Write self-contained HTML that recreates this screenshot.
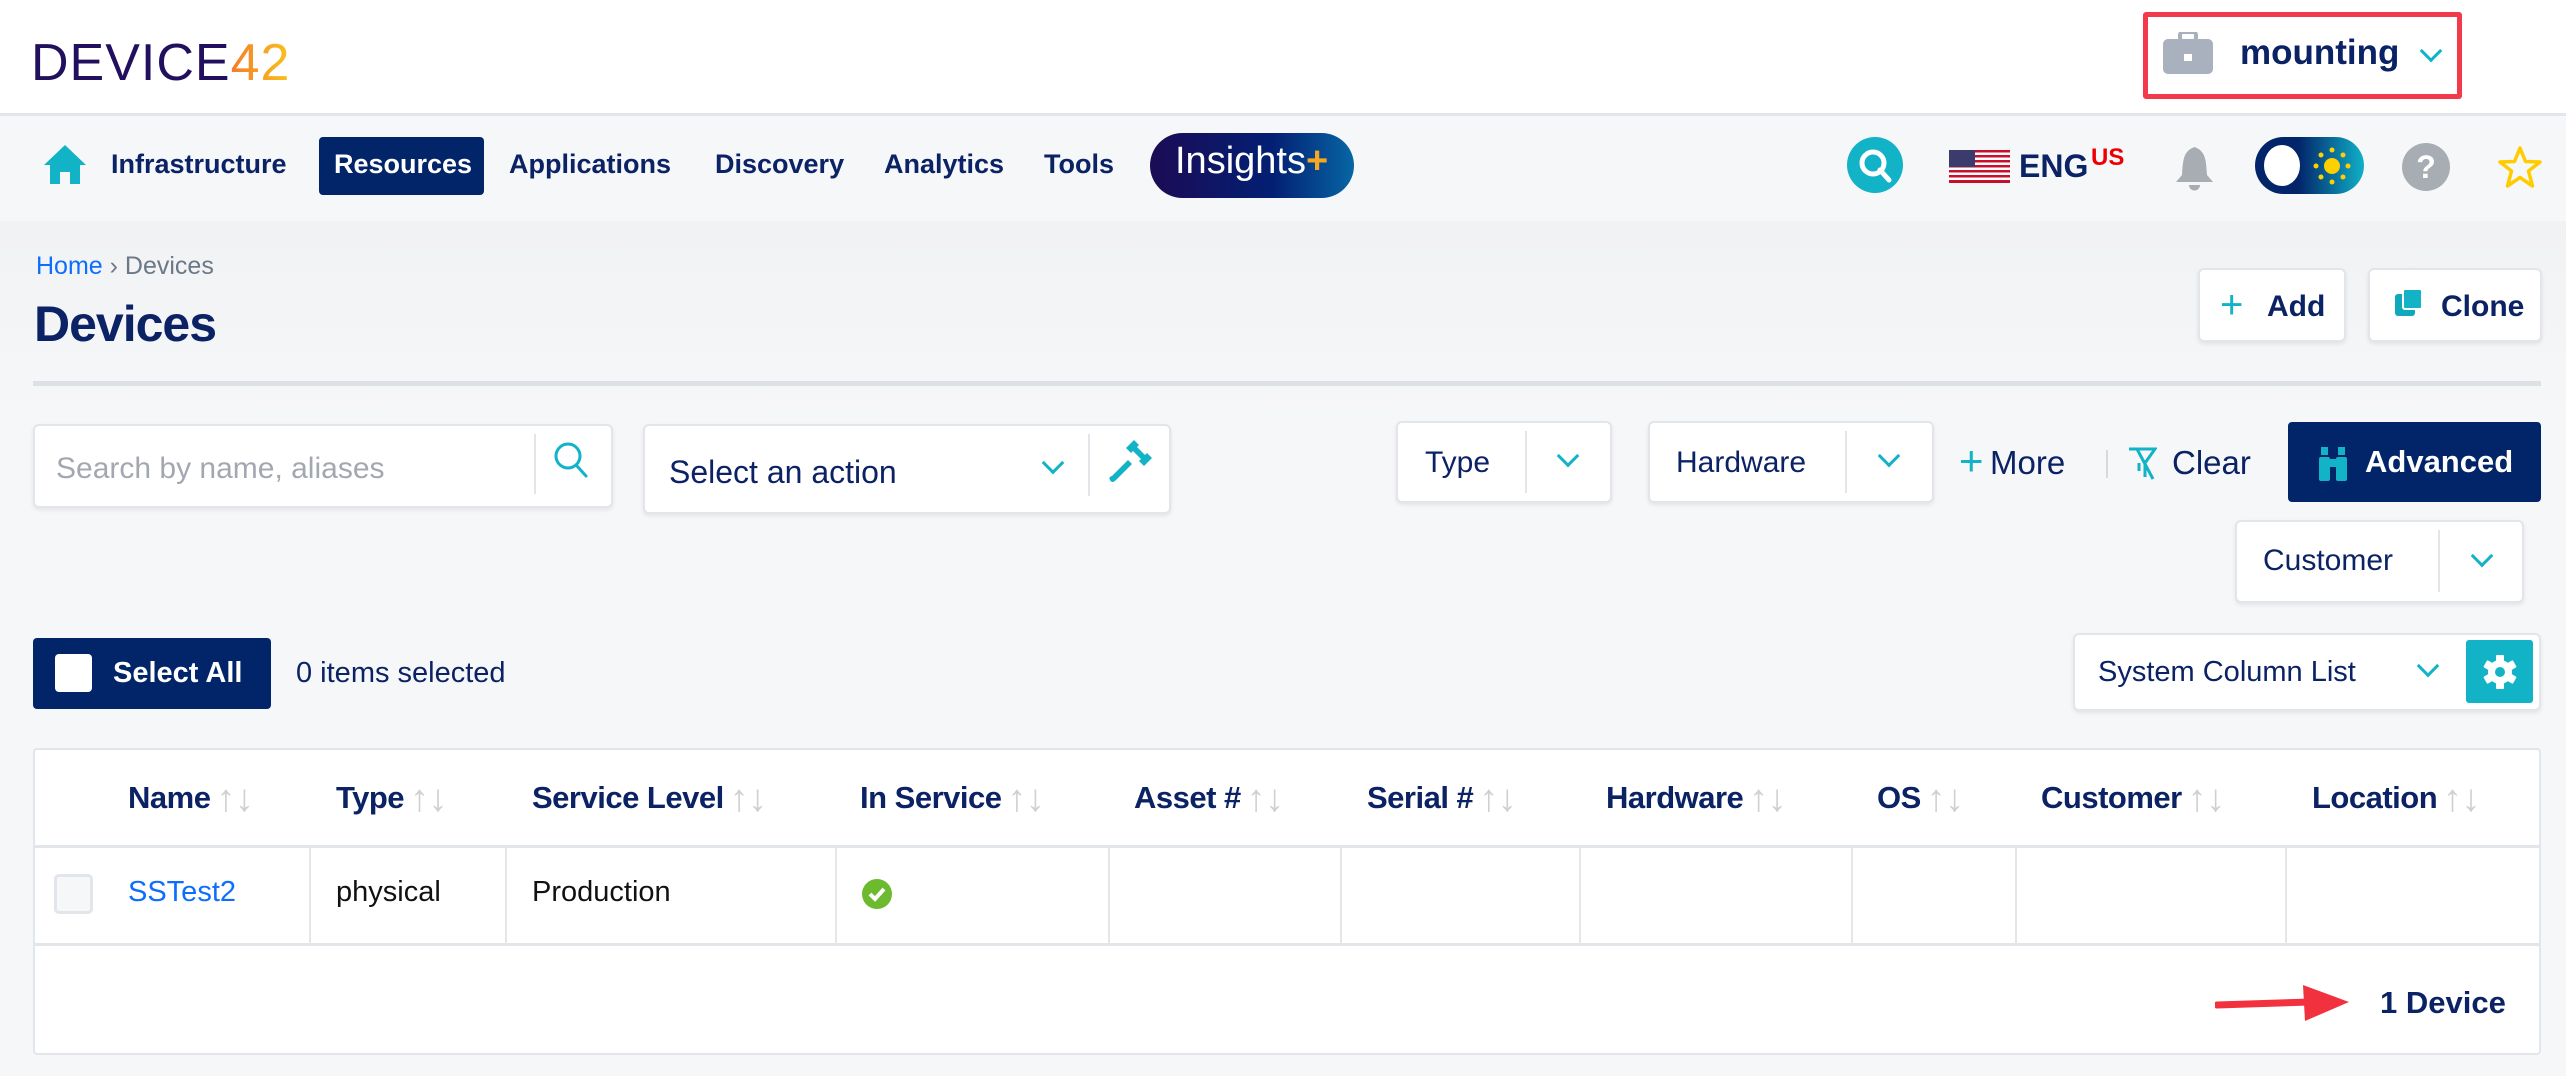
<!DOCTYPE html>
<html><head><meta charset="utf-8"><style>
*{box-sizing:border-box;margin:0;padding:0}
body{width:2566px;height:1076px;position:relative;overflow:hidden;background:#f6f7f9;font-family:"Liberation Sans",sans-serif;color:#0b2265}
.a{position:absolute}
.b{font-weight:bold}
.box{position:absolute;background:#fff;border:2px solid #e2e5e9;border-radius:6px;box-shadow:0 2px 4px rgba(0,0,0,.08)}
.nav{font-size:27px;font-weight:bold;top:149px}
.chev{position:absolute;width:16px;height:16px;border-right:3.5px solid #12b3c6;border-bottom:3.5px solid #12b3c6;transform:rotate(45deg)}
.th{position:absolute;top:780px;font-size:31px;font-weight:bold;letter-spacing:-0.5px}
.th span{color:#cdd1d5;font-weight:normal;margin-left:6px;font-size:38px;line-height:31px;vertical-align:-3px}
.vl{position:absolute;top:846px;width:2px;height:98px;background:#e4e7ea}
</style></head><body>
<div class="a" style="left:0;top:0;width:2566px;height:116px;background:#fff;border-bottom:3px solid #e2e5e9"></div>
<div class="a" style="left:31px;top:33px;font-size:52px;letter-spacing:1px;color:#22105f">DEVICE<span style="background:linear-gradient(90deg,#f57c2a,#f9c21a);-webkit-background-clip:text;color:transparent">42</span></div>
<div class="a" style="left:2143px;top:12px;width:319px;height:87px;border:5px solid #f23a4a;border-radius:3px;background:#fff"></div>
<svg class="a" style="left:2163px;top:32px" width="50" height="42" viewBox="0 0 50 42"><rect x="17" y="0" width="16" height="9" rx="3" fill="none" stroke="#a8b1bd" stroke-width="4"/><rect x="0" y="7" width="50" height="35" rx="5" fill="#a8b1bd"/><rect x="21" y="22" width="8" height="7" fill="#fff"/></svg>
<div class="a b" style="left:2240px;top:33px;font-size:35px;color:#0b2265">mounting</div>
<div class="chev" style="left:2423px;top:43px"></div>
<div class="a" style="left:0;top:119px;width:2566px;height:102px;background:#f6f7f9"></div>
<svg class="a" style="left:44px;top:145px" width="42" height="39" viewBox="0 0 42 39"><path d="M21 0 L42 20 L36 20 L36 39 L26 39 L26 27 L16 27 L16 39 L6 39 L6 20 L0 20Z" fill="#12b3c6"/></svg>
<div class="a nav" style="left:111px">Infrastructure</div>
<div class="a" style="left:319px;top:137px;width:165px;height:58px;background:#02256a;border-radius:4px"></div>
<div class="a nav" style="left:334px;color:#fff">Resources</div>
<div class="a nav" style="left:509px">Applications</div>
<div class="a nav" style="left:715px">Discovery</div>
<div class="a nav" style="left:884px">Analytics</div>
<div class="a nav" style="left:1044px">Tools</div>
<div class="a" style="left:1150px;top:133px;width:204px;height:65px;border-radius:33px;background:linear-gradient(90deg,#1c0b55,#031f73 60%,#0766a4)"></div>
<div class="a" style="left:1175px;top:140px;font-size:38px;color:#fff">Insights<span style="color:#f5a623;font-weight:bold">+</span></div>
<svg class="a" style="left:1847px;top:137px" width="56" height="56" viewBox="0 0 56 56"><circle cx="28" cy="28" r="28" fill="#12b3c6"/><circle cx="26" cy="26" r="11" fill="none" stroke="#fff" stroke-width="5"/><path d="M33 33 L42 43" stroke="#fff" stroke-width="5" stroke-linecap="round"/></svg>
<svg class="a" style="left:1949px;top:150px" width="61" height="33" viewBox="0 0 61 33"><rect width="61" height="33" fill="#fff"/><g fill="#c8102e"><rect y="0" width="61" height="2.5"/><rect y="5" width="61" height="2.5"/><rect y="10" width="61" height="2.5"/><rect y="15" width="61" height="2.5"/><rect y="20" width="61" height="2.5"/><rect y="25" width="61" height="2.5"/><rect y="30" width="61" height="3"/></g><rect width="26" height="17" fill="#3c3b6e"/></svg>
<div class="a b" style="left:2019px;top:148px;font-size:32px;color:#0b2265">ENG</div>
<div class="a b" style="left:2091px;top:144px;font-size:24px;color:#e00">US</div>
<svg class="a" style="left:2173px;top:145px" width="43" height="48" viewBox="0 0 43 48"><path d="M21.5 2 C10 6 10 16 9 30 L3 37 L40 37 L34 30 C33 16 33 6 21.5 2Z" fill="#a8adb4"/><path d="M16 40 a5.5 5.5 0 0 0 11 0Z" fill="#a8adb4"/></svg>
<div class="a" style="left:2255px;top:137px;width:109px;height:57px;border-radius:29px;background:linear-gradient(90deg,#02256a 40%,#10b0c8)"></div>
<div class="a" style="left:2264px;top:145px;width:36px;height:41px;border-radius:50%;background:#fff"></div>
<svg class="a" style="left:2312px;top:146px" width="40" height="40" viewBox="0 0 40 40"><circle cx="20" cy="20" r="8" fill="#ffd000"/><g fill="#ffd000"><circle cx="20" cy="4" r="2.5"/><circle cx="20" cy="36" r="2.5"/><circle cx="4" cy="20" r="2.5"/><circle cx="36" cy="20" r="2.5"/><circle cx="9" cy="9" r="2.5"/><circle cx="31" cy="9" r="2.5"/><circle cx="9" cy="31" r="2.5"/><circle cx="31" cy="31" r="2.5"/></g></svg>
<div class="a" style="left:2402px;top:143px;width:48px;height:48px;border-radius:50%;background:#a8adb4;color:#fff;font-size:32px;font-weight:bold;text-align:center;line-height:48px">?</div>
<svg class="a" style="left:2497px;top:145px" width="46" height="44" viewBox="0 0 46 44"><path d="M23 3 L28.5 16.5 L43 17 L31.5 26 L35.5 41 L23 32.5 L10.5 41 L14.5 26 L3 17 L17.5 16.5Z" fill="none" stroke="#ffcc00" stroke-width="3.5" stroke-linejoin="round"/></svg>
<div class="a" style="left:0;top:221px;width:2566px;height:200px;background:linear-gradient(#f1f2f4,#f6f7f9)"></div>
<div class="a" style="left:36px;top:252px;font-size:25px;color:#6b7886"><span style="color:#0d6efd">Home</span> › Devices</div>
<div class="a b" style="left:34px;top:295px;font-size:50px;letter-spacing:-1px">Devices</div>
<div class="box" style="left:2198px;top:268px;width:148px;height:74px"></div>
<div class="a" style="left:2220px;top:290px;font-size:40px;color:#12b3c6;line-height:30px">+</div>
<div class="a b" style="left:2267px;top:290px;font-size:30px">Add</div>
<div class="box" style="left:2368px;top:268px;width:174px;height:74px"></div>
<div class="a" style="left:2395px;top:294px;width:20px;height:22px;background:#0ea9bd;border-radius:3px"></div>
<div class="a" style="left:2402px;top:288px;width:21px;height:22px;background:#12b3c6;border-radius:3px;border:2px solid #fff"></div>
<div class="a b" style="left:2441px;top:290px;font-size:30px">Clone</div>
<div class="a" style="left:33px;top:381px;width:2508px;height:5px;background:#dde1e5"></div>
<div class="box" style="left:33px;top:424px;width:580px;height:84px"></div>
<div class="a" style="left:56px;top:452px;font-size:30px;color:#a3a8b0">Search by name, aliases</div>
<div class="a" style="left:534px;top:434px;width:2px;height:60px;background:#e2e5e9"></div>
<svg class="a" style="left:553px;top:441px" width="36" height="38" viewBox="0 0 36 38"><circle cx="15" cy="15" r="12" fill="none" stroke="#12b3c6" stroke-width="3"/><path d="M24 25 L33 35" stroke="#12b3c6" stroke-width="3" stroke-linecap="round"/></svg>
<div class="box" style="left:643px;top:424px;width:528px;height:90px"></div>
<div class="a" style="left:669px;top:454px;font-size:32px">Select an action</div>
<div class="chev" style="left:1045px;top:455px"></div>
<div class="a" style="left:1088px;top:434px;width:2px;height:62px;background:#e2e5e9"></div>
<svg class="a" style="left:1108px;top:440px" width="44" height="44" viewBox="0 0 44 44"><g fill="#12b3c6"><path d="M18 8 L26 0 L31 5 L29 7 L37 15 L39 13 L44 18 L36 26 L31 21 L33 19 L25 11 L23 13Z"/><path d="M20 20 L24 24 L8 40 Q4 44 2 40 Q0 37 4 36Z"/></g></svg>
<div class="box" style="left:1396px;top:421px;width:216px;height:82px"></div>
<div class="a" style="left:1425px;top:446px;font-size:30px">Type</div>
<div class="a" style="left:1525px;top:431px;width:2px;height:62px;background:#e2e5e9"></div>
<div class="chev" style="left:1560px;top:448px"></div>
<div class="box" style="left:1648px;top:421px;width:286px;height:82px"></div>
<div class="a" style="left:1676px;top:446px;font-size:30px">Hardware</div>
<div class="a" style="left:1845px;top:431px;width:2px;height:62px;background:#e2e5e9"></div>
<div class="chev" style="left:1881px;top:448px"></div>
<div class="a" style="left:1959px;top:436px;font-size:42px;color:#12b3c6;line-height:50px">+</div>
<div class="a" style="left:1990px;top:444px;font-size:33px">More</div>
<div class="a" style="left:2106px;top:450px;width:2px;height:28px;background:#d6dadf"></div>
<svg class="a" style="left:2127px;top:447px" width="30" height="34" viewBox="0 0 30 34"><path d="M2 2 L28 2 L18 16 L18 30 M10 2 L26 32 M12 16 L12 24" fill="none" stroke="#12b3c6" stroke-width="3"/></svg>
<div class="a" style="left:2172px;top:444px;font-size:33px">Clear</div>
<div class="a" style="left:2288px;top:422px;width:253px;height:80px;background:#02256a;border-radius:4px"></div>
<svg class="a" style="left:2318px;top:447px" width="30" height="34" viewBox="0 0 30 34"><g fill="#12b3c6"><rect x="1" y="10" width="11" height="24" rx="2"/><rect x="18" y="10" width="11" height="24" rx="2"/><rect x="3" y="0" width="7" height="8"/><rect x="20" y="0" width="7" height="8"/><rect x="11" y="12" width="8" height="8"/></g></svg>
<div class="a b" style="left:2365px;top:444px;font-size:31px;color:#fff">Advanced</div>
<div class="box" style="left:2235px;top:520px;width:289px;height:83px"></div>
<div class="a" style="left:2263px;top:544px;font-size:30px">Customer</div>
<div class="a" style="left:2438px;top:530px;width:2px;height:62px;background:#e2e5e9"></div>
<div class="chev" style="left:2474px;top:548px"></div>
<div class="a" style="left:33px;top:638px;width:238px;height:71px;background:#02256a;border-radius:4px"></div>
<div class="a" style="left:55px;top:654px;width:37px;height:38px;background:#fff;border-radius:4px"></div>
<div class="a b" style="left:113px;top:657px;font-size:29px;color:#fff">Select All</div>
<div class="a" style="left:296px;top:657px;font-size:29px">0 items selected</div>
<div class="box" style="left:2073px;top:633px;width:468px;height:78px"></div>
<div class="a" style="left:2098px;top:656px;font-size:29px">System Column List</div>
<div class="chev" style="left:2420px;top:658px"></div>
<div class="a" style="left:2466px;top:640px;width:67px;height:63px;background:#12b3c6;border-radius:3px"></div>
<svg class="a" style="left:2482px;top:654px" width="36" height="36" viewBox="0 0 36 36"><g fill="#fff" transform="translate(18 18)"><rect x="-4" y="-17" width="8" height="34" rx="1"/><rect x="-4" y="-17" width="8" height="34" rx="1" transform="rotate(60)"/><rect x="-4" y="-17" width="8" height="34" rx="1" transform="rotate(120)"/><circle r="12"/></g><circle cx="18" cy="18" r="5" fill="#12b3c6"/></svg>
<div class="a" style="left:33px;top:748px;width:2508px;height:307px;background:#fff;border:2px solid #e2e5e9;border-radius:4px"></div>
<div class="a" style="left:33px;top:845px;width:2508px;height:3px;background:#e2e5e9"></div>
<div class="a" style="left:33px;top:943px;width:2508px;height:3px;background:#e2e5e9"></div>
<div class="th" style="left:128px">Name<span>↑↓</span></div>
<div class="th" style="left:336px">Type<span>↑↓</span></div>
<div class="th" style="left:532px">Service Level<span>↑↓</span></div>
<div class="th" style="left:860px">In Service<span>↑↓</span></div>
<div class="th" style="left:1134px">Asset #<span>↑↓</span></div>
<div class="th" style="left:1367px">Serial #<span>↑↓</span></div>
<div class="th" style="left:1606px">Hardware<span>↑↓</span></div>
<div class="th" style="left:1877px">OS<span>↑↓</span></div>
<div class="th" style="left:2041px">Customer<span>↑↓</span></div>
<div class="th" style="left:2312px">Location<span>↑↓</span></div>
<div class="vl" style="left:309px"></div><div class="vl" style="left:505px"></div><div class="vl" style="left:835px"></div><div class="vl" style="left:1108px"></div><div class="vl" style="left:1340px"></div><div class="vl" style="left:1579px"></div><div class="vl" style="left:1851px"></div><div class="vl" style="left:2015px"></div><div class="vl" style="left:2285px"></div>
<div class="a" style="left:54px;top:874px;width:39px;height:40px;border:3px solid #e2e5e9;border-radius:5px;background:#f6f7f9"></div>
<div class="a" style="left:128px;top:876px;font-size:29px;color:#0d6efd">SSTest2</div>
<div class="a" style="left:336px;top:876px;font-size:29px;color:#111">physical</div>
<div class="a" style="left:532px;top:876px;font-size:29px;color:#111">Production</div>
<svg class="a" style="left:862px;top:879px" width="30" height="30" viewBox="0 0 30 30"><circle cx="15" cy="15" r="15" fill="#6cbb2e"/><path d="M8 15 L13 20 L22 10" fill="none" stroke="#fff" stroke-width="4"/></svg>
<svg class="a" style="left:2215px;top:983px" width="136" height="40" viewBox="0 0 136 40"><path d="M2 22 L95 19" stroke="#f2313e" stroke-width="7" stroke-linecap="round"/><path d="M88 2 L134 19 L90 38Z" fill="#f2313e"/></svg>
<div class="a b" style="left:2380px;top:985px;font-size:31px">1 Device</div>
</body></html>
